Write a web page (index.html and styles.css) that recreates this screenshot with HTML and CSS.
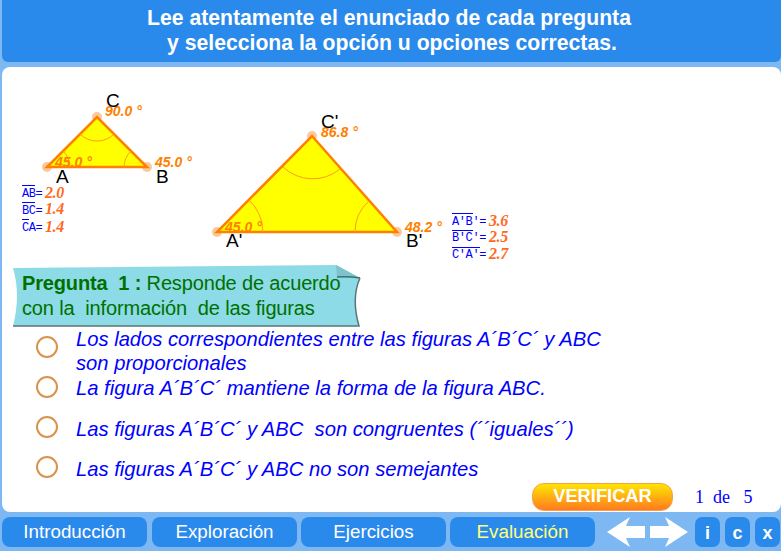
FILE: index.html
```html
<!DOCTYPE html>
<html lang="es">
<head>
  <meta charset="UTF-8">
  <meta name="viewport" content="width=device-width, initial-scale=1.0">
  <title>Evaluación</title>
  <link rel="stylesheet" href="styles.css">
</head>
<body>

<div class="page">
  <header class="header">
    <p>Lee atentamente el enunciado de cada pregunta
 y selecciona la opción u opciones correctas.</p>
  </header>

  <main class="panel">
    <!-- Figures: viewBox uses the page coordinates -->
    <svg class="figures" viewBox="2 67 779 198" width="779" height="198">
      <g class="halo">
        <circle cx="47" cy="167" r="5"/><circle cx="147" cy="167" r="5"/><circle cx="97" cy="117" r="5"/>
        <circle cx="217" cy="232" r="5"/><circle cx="397" cy="232" r="5"/><circle cx="312" cy="136" r="5"/>
      </g>
      <polygon class="tri" points="47,167 147,167 97,117"/>
      <polygon class="tri" points="217,232 397,232 312,136"/>
      <g class="arc">
        <path d="M80 134 A24 24 0 0 0 114 134"/>
        <path d="M63 151 A23 23 0 0 1 70 167"/>
        <path d="M124 167 A23 23 0 0 1 131 151"/>
        <path d="M283 167 A43 43 0 0 0 340 169"/>
        <path d="M249 200 A46 46 0 0 1 263 232"/>
        <path d="M355 232 A41 41 0 0 1 369 201"/>
      </g>
      <g class="angle">
        <text x="105" y="116">90.0 °</text>
        <text x="55" y="167">45.0 °</text>
        <text x="155" y="167">45.0 °</text>
        <text x="321" y="137">86.8 °</text>
        <text x="225" y="232">45.0 °</text>
        <text x="405" y="232">48.2 °</text>
      </g>
      <g class="vertex">
        <text x="106" y="107">C</text>
        <text x="56" y="183">A</text>
        <text x="156" y="183">B</text>
        <text x="321" y="128">C'</text>
        <text x="226" y="247">A'</text>
        <text x="406" y="247">B'</text>
      </g>
      <g class="seg">
        <text x="22" y="197">AB=</text>
        <text x="22" y="214">BC=</text>
        <text x="22" y="231">CA=</text>
        <text x="452" y="225">A'B'=</text>
        <text x="452" y="241">B'C'=</text>
        <text x="452" y="258">C'A'=</text>
      </g>
      <g class="overline">
        <path d="M22 185.500H35M22 202.500H35M22 219.500H29M452 213.500H473M452 230.500H473M452 247.500H480"/>
      </g>
      <g class="length">
        <text x="45" y="198">2.0</text>
        <text x="45" y="214">1.4</text>
        <text x="45" y="232">1.4</text>
        <text x="489" y="226">3.6</text>
        <text x="489" y="242">2.5</text>
        <text x="489" y="259">2.7</text>
      </g>
    </svg>

    <div class="question">
      <svg class="question-bg" viewBox="0 0 350 64" width="350" height="64">
        <path class="question-shade" d="M1 3 L324 0 L348 13 Q339 33 347 61 L1 61 Q9 30 1 3 Z"/>
        <path class="question-fold" d="M324 0 L348 13 L325 12 Z"/>
        <path class="question-curl" d="M325 12 Q336 11 348 13"/>
        <path class="question-edge" d="M348 13 Q339 33 347 61 L1 61"/>
      </svg>
      <p class="question-text"><b>Pregunta  1 :</b> Responde de acuerdo
con la  información  de las figuras</p>
    </div>

    <ul class="options">
      <li class="option option-long"><span class="radio"></span><span class="option-text">Los lados correspondientes entre las figuras A´B´C´ y ABC
son proporcionales</span></li>
      <li class="option"><span class="radio"></span><span class="option-text">La figura A´B´C´ mantiene la forma de la figura ABC.</span></li>
      <li class="option option-low"><span class="radio"></span><span class="option-text">Las figuras A´B´C´ y ABC  son congruentes (´´iguales´´)</span></li>
      <li class="option option-low"><span class="radio"></span><span class="option-text">Las figuras A´B´C´ y ABC no son semejantes</span></li>
    </ul>

    <div class="check-row">
      <button class="verify">VERIFICAR</button>
      <span class="counter">1 &nbsp;de &nbsp; 5</span>
    </div>
  </main>

  <nav class="nav">
    <a class="tab">Introducción</a>
    <a class="tab">Exploración</a>
    <a class="tab">Ejercicios</a>
    <a class="tab tab-active">Evaluación</a>
    <svg class="arrows" viewBox="0 0 81 30" width="81" height="30">
      <polygon points="0,15 23,0 19,9 38,9 38,21 19,21 23,30"/>
      <polygon points="43,9 62,9 58,0 81,15 58,30 62,21 43,21"/>
    </svg>
    <a class="mini">i</a>
    <a class="mini">c</a>
    <a class="mini">x</a>
  </nav>
</div>

</body>
</html>
```

FILE: styles.css
```css
body {
  margin: 0;
  background-color: #7db8f3;
  font-family: "Liberation Sans", Arial, sans-serif;
  overflow: hidden;
}
.page {
  display: flex;
  flex-direction: column;
  gap: 5px;
  width: 781px;
  height: 551px;
  padding-left: 2px;
  box-sizing: border-box;
}
.header {
  height: 62px;
  background-color: #2a8aec;
  border-radius: 0 0 6px 6px;
  color: #fff;
  font-size: 21.200px;
  font-weight: bold;
  line-height: 25px;
  text-align: center;
}
.header p {
  margin: 0;
  padding: 5px 5px 0 0;
  white-space: pre;
}
.panel {
  display: flex;
  flex-direction: column;
  height: 445px;
  background-color: #fff;
  border-radius: 8px;
  box-sizing: border-box;
  padding-bottom: 1px;
}

/* figures */
.figures {
  display: block;
  flex: none;
}
.halo circle { fill: #fbc89c; }
.tri {
  fill: #ffff00;
  stroke: #ff8000;
  stroke-width: 2.500;
}
.arc path {
  fill: none;
  stroke: #ff9a20;
  stroke-width: 1;
}
.angle text {
  fill: #ff8000;
  font-size: 14px;
  font-weight: bold;
  font-style: italic;
}
.vertex text {
  fill: #000;
  font-size: 19px;
}
.seg text {
  fill: #0000ff;
  font-family: "Liberation Mono", monospace;
  font-size: 12px;
  letter-spacing: -0.400px;
}
.overline path {
  fill: none;
  stroke: #0000ff;
  stroke-width: 1;
}
.length text {
  fill: #ff6a20;
  font-family: "Liberation Serif", serif;
  font-size: 16px;
  font-weight: bold;
  font-style: italic;
  letter-spacing: -0.400px;
}

/* question banner */
.question {
  position: relative;
  flex: none;
  width: 350px;
  height: 62px;
  margin-left: 10px;
}
.question-bg {
  position: absolute;
  left: 0;
  top: 0;
}
.question-shade { fill: #8cdbe6; }
.question-fold { fill: #7cc3cc; }
.question-curl {
  fill: none;
  stroke: #3f6f76;
  stroke-width: 1.500;
}
.question-edge {
  fill: none;
  stroke: #5d7477;
  stroke-width: 1.500;
}
.question-text {
  position: relative;
  margin: 0;
  padding: 6px 0 0 10px;
  color: #007000;
  font-size: 20px;
  letter-spacing: -0.150px;
  line-height: 25px;
  white-space: pre;
}

/* options */
.options {
  flex: none;
  display: grid;
  grid-auto-rows: 40px;
  height: 156px;
  margin: 0;
  padding: 0 0 0 34px;
  list-style: none;
}
.option {
  display: flex;
  gap: 18px;
}
.radio {
  flex: none;
  width: 18px;
  height: 18px;
  margin-top: 9px;
  border: 2px solid #d9934f;
  border-radius: 50%;
}
.option-text {
  padding-top: 9px;
  color: #0000ff;
  font-size: 20.200px;
  font-style: italic;
  line-height: 24px;
  white-space: pre;
}
.option-long .option-text {
  padding-top: 0;
}
.option-low .option-text {
  padding-top: 10px;
}

/* verify */
.check-row {
  margin-top: auto;
  display: flex;
  align-items: center;
  gap: 22px;
  padding-left: 530px;
}
.verify {
  width: 141px;
  height: 28px;
  padding: 0 0 2px;
  background: linear-gradient(#ffe600, #ff7a20);
  border: 1px solid #f5a04a;
  border-radius: 12px;
  color: #fff;
  font-family: inherit;
  font-size: 18.300px;
  font-weight: bold;
}
.counter {
  color: #0000ff;
  font-family: "Liberation Serif", serif;
  font-size: 18px;
}

/* bottom nav */
.nav {
  display: flex;
  align-items: center;
  height: 30px;
}
.tab {
  display: block;
  width: 145px;
  height: 30px;
  margin-right: 4px;
  background-color: #2a8aec;
  border-radius: 8px;
  color: #fff;
  font-size: 18.800px;
  line-height: 30px;
  text-align: center;
}
.tab:first-child { margin-right: 5px; }
.tab-active { color: #ffff80; }
.arrows {
  fill: #fff;
  margin: 0 7px 0 8px;
}
.mini {
  display: block;
  width: 25px;
  height: 30px;
  margin-right: 5px;
  background-color: #2a8aec;
  border-radius: 7px;
  color: #fff;
  font-size: 18px;
  font-weight: bold;
  line-height: 32px;
  text-align: center;
}
.mini:last-child { margin-right: 0; }
```
